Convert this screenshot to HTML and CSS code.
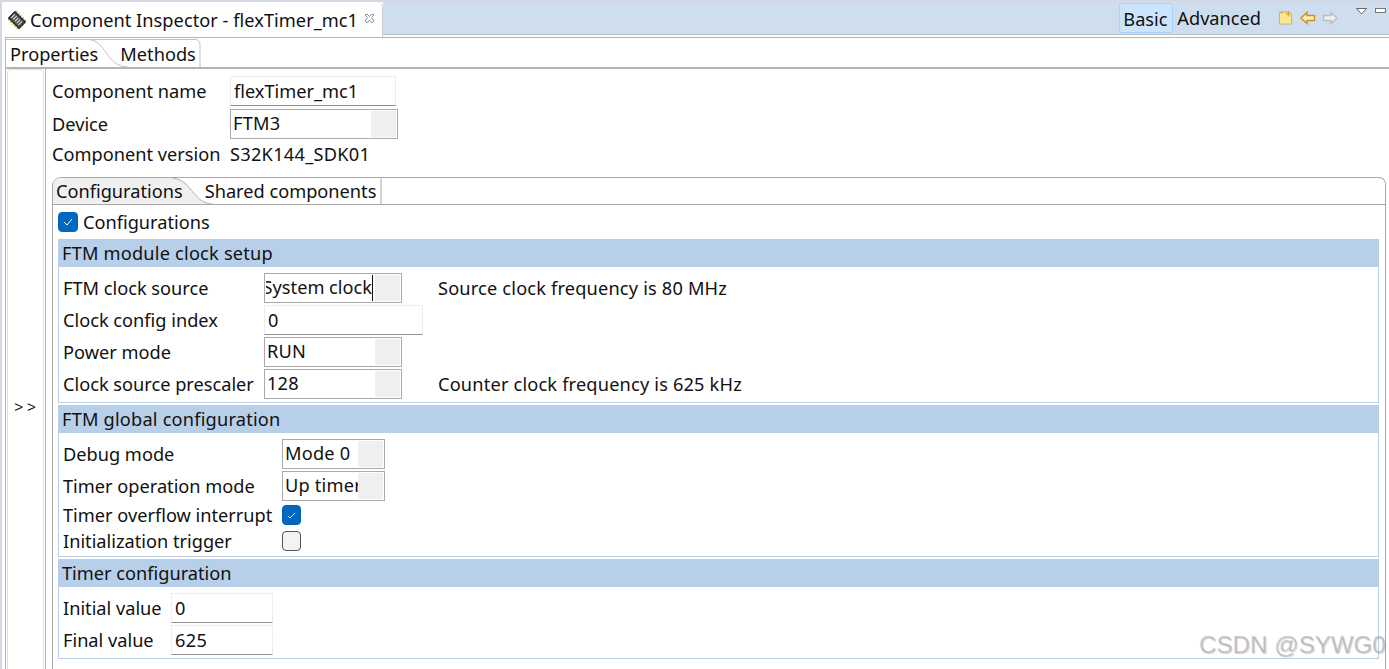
FILE: index.html
```html
<!DOCTYPE html>
<html lang="en">
<head>
<meta charset="utf-8">
<title>Component Inspector</title>
<link rel="stylesheet" href="styles.css">
</head>
<body>
<div class="view">
  <header class="titlebar">
    <div class="viewtab">
      <svg class="chip" width="20" height="20" viewBox="0 0 20 20"><g transform="rotate(-45 10 10)"><path d="M3.500 4h3M3.500 7h3M3.500 10h3M3.500 13h3M3.500 16h3M13.500 4h3M13.500 7h3M13.500 10h3M13.500 13h3M13.500 16h3" stroke="#b5a02c" stroke-width="1.300"/><rect x="5.500" y="2.500" width="9" height="15" fill="#4a4a4a" stroke="#222"/><path d="M7.500 4.500h5M7.500 7h5M7.500 9.500h5M7.500 12h5M7.500 14.500h5" stroke="#e8e8e8" stroke-width="1.100"/></g></svg>
      <span class="viewtitle">Component Inspector - flexTimer_mc1</span>
      <svg class="close" width="11" height="11" viewBox="0 0 11 11"><path d="M1 2l2-1 2.500 2.500L8 1l2 1-2.500 2.500L10 8 8 10 5.500 7 3 10 1 8l2.500-3.500z" fill="#fff" stroke="#8a8f96"/></svg>
    </div>
    <div class="tools">
      <span class="mode active">Basic</span>
      <span class="mode">Advanced</span>
      <svg class="tool first" width="15" height="16" viewBox="0 0 16 16"><path d="M1.500 1.500h10l3 3v10h-13z" fill="#fbe88e" stroke="#b9b28a"/><path d="M11 .5v6M8 3.500h6" stroke="#e6a23a" stroke-width="1.300"/><path d="M3 2.500h2" stroke="#e05a5a"/></svg>
      <svg class="tool back" width="16" height="14" viewBox="0 0 16 14"><path d="M7 1.500L1 7l6 5.500V9.500h7.500v-5H7z" fill="#fdeeb5" stroke="#c8921e" stroke-width="1.400"/></svg>
      <svg class="tool" width="16" height="14" viewBox="0 0 16 14"><path d="M9 1.500L15 7l-6 5.500V9.500H1.500v-5H9z" fill="#eef1f4" stroke="#b8bdc2" stroke-width="1.400"/></svg>
      <svg class="menu" width="11" height="7" viewBox="0 0 11 7"><path d="M.5.500h10L5.500 6z" fill="#fff" stroke="#666"/></svg>
      <svg class="min" width="11" height="6" viewBox="0 0 11 6"><rect x=".5" y=".5" width="10" height="4" fill="#fff" stroke="#777"/></svg>
    </div>
  </header>

  <div class="body">
    <div class="frame">
      <nav class="tabs outer">
        <svg class="tabshape" width="200" height="30" viewBox="0 0 200 30"><path d="M82 1.500H189Q194 1.500 194 7V29" fill="none" stroke="#c0c0c0"/><path d="M0 1.500H82C100 1.500 100 29 122 29" fill="#fff" stroke="#c0c0c0"/></svg>
        <span class="tab props">Properties</span>
        <span class="tab meth">Methods</span>
      </nav>
      <div class="split">
        <aside class="strip"><span>&gt; &gt;</span></aside>
        <main class="main">
          <div class="comp">
            <div class="crow"><label>Component name</label><span class="text w166">flexTimer_mc1</span></div>
            <div class="crow"><label>Device</label><span class="combo w168"><span class="val">FTM3</span><i></i></span></div>
            <div class="crow plain"><label>Component version</label><span class="version">S32K144_SDK01</span></div>
          </div>
          <div class="inner">
            <nav class="tabs second">
              <svg class="tabshape" width="330" height="27" viewBox="0 0 330 27"><path d="M0 0H120C138 0 140 26 160 26H0z" fill="#f0f0f0"/><path d="M120 .5C138 .5 140 26 160 26" fill="none" stroke="#b0b0b0"/><path d="M328 0V26" stroke="#a8a8a8"/></svg>
              <span class="tab conf">Configurations</span>
              <span class="tab shared">Shared components</span>
            </nav>
            <div class="pane">
              <div class="checkrow"><span class="check on big"><svg width="10" height="8" viewBox="0 0 10 8"><path d="M1 4l3 3 5-6" fill="none" stroke="#fff"/></svg></span>Configurations</div>

              <section class="group">
                <h2 class="wide">FTM module clock setup</h2>
                <div class="rows one">
                  <div class="row"><label>FTM clock source</label><span class="combo w138"><span class="val cut"><span>System clock</span></span><i></i><b class="caret"></b></span><span class="note">Source clock frequency is 80 MHz</span></div>
                  <div class="row"><label>Clock config index</label><span class="text w159">0</span></div>
                  <div class="row"><label>Power mode</label><span class="combo w138"><span class="val">RUN</span><i></i></span></div>
                  <div class="row"><label>Clock source prescaler</label><span class="combo w138"><span class="val">128</span><i></i></span><span class="note">Counter clock frequency is 625 kHz</span></div>
                </div>
              </section>

              <section class="group">
                <h2 class="wide">FTM global configuration</h2>
                <div class="rows two">
                  <div class="row"><label>Debug mode</label><span class="combo w103"><span class="val">Mode 0</span><i></i></span></div>
                  <div class="row"><label>Timer operation mode</label><span class="combo w103"><span class="val">Up timer</span><i></i></span></div>
                  <div class="row short"><label>Timer overflow interrupt</label><span class="check on"><svg width="9" height="7" viewBox="0 0 9 7"><path d="M1 4l2 2 5-5" fill="none" stroke="#fff" stroke-width=".8"/></svg></span></div>
                  <div class="row short"><label>Initialization trigger</label><span class="check"></span></div>
                </div>
              </section>

              <section class="group">
                <h2>Timer configuration</h2>
                <div class="rows three">
                  <div class="row"><label>Initial value</label><span class="text w102">0</span></div>
                  <div class="row"><label>Final value</label><span class="text w102">625</span></div>
                </div>
              </section>
            </div>
          </div>
        </main>
      </div>
    </div>
  </div>
  <div class="watermark">CSDN @SYWG0</div>
</div>
</body>
</html>
```
FILE: styles.css
```css
* { box-sizing: border-box; }
html, body { margin: 0; height: 100%; overflow: hidden; }
body { background: #fff; color: #111; font: 18.2px/24px "Noto Sans", "Open Sans", sans-serif; }
.view { position: relative; width: 1389px; height: 669px; overflow: hidden; }
label { display: block; }

/* Title bar */
.titlebar { height: 37px; display: flex; align-items: flex-start; background: #fff; border-top: 2px solid #d5d8e4; border-left: 2px solid #d5d8e4; }
.viewtab { flex: none; width: 381px; height: 35px; padding-left: 5px; display: flex; align-items: center; background: #fff; border-radius: 6px 6px 0 0; border-right: 1px solid #c6cdd6; }
.chip { flex: none; margin-right: 3px; }
.viewtitle { white-space: nowrap; letter-spacing: .04px; }
.close { margin-left: 6px; margin-top: -3px; }
.tools { flex: 1; height: 33px; display: flex; align-items: center; justify-content: flex-end; padding-right: 3px; background: #cfdeee; border-bottom: 1px solid #bcc1c8; }
.mode { height: 30px; line-height: 31px; padding: 0 3px; }
.mode.active { background: #cce4fb; border: 1px solid #a6d2fb; border-radius: 2px; width: 54px; margin-right: 1px; }
.tool { margin-left: 6px; }
.tool.first { margin-left: 14px; }
.tool.back { margin-left: 7px; }
.menu { margin: -14px 0 0 18px; }
.min { margin: -14px 0 0 8px; }

/* Body */
.body { height: 632px; border-left: 2px solid #d5d8e4; padding-left: 3px; }
.frame { height: 100%; border-left: 1px solid #b8b8b8; border-top: 1px solid #b4b4b4; }
.tabs { position: relative; display: flex; }
.tabshape { position: absolute; left: 0; top: 0; pointer-events: none; }
.outer { height: 31px; border-bottom: 2px solid #b4b4b4; }
.tab { position: relative; white-space: nowrap; }
.props { margin: 4px 0 0 4px; }
.meth { margin: 4px 0 0 22px; }
.split { display: flex; height: 600px; }
.strip { flex: none; width: 37px; margin-left: 1px; border: 1px solid #e3e3e3; border-bottom: 0; border-radius: 4px 4px 0 0; display: flex; align-items: center; justify-content: center; font: 15px/20px "Liberation Sans", sans-serif; }
.strip span { margin-top: 74px; margin-right: 1px; }
.main { flex: 1; min-width: 0; margin-left: 1px; padding-left: 6px; border-left: 1px solid #b4b4b4; }

/* Component header */
.comp { padding-top: 7px; }
.crow { display: grid; grid-template-columns: 178px auto; height: 33px; align-items: start; justify-items: start; }
.crow label { line-height: 30px; }
.crow.plain { height: 24px; align-items: center; }
.crow.plain label { line-height: 24px; }
.version { letter-spacing: .27px; }
.text { display: block; height: 30px; line-height: 28px; padding-left: 3px; background: #fff; border: 1px solid #ededed; border-bottom: 1px solid #8f8f8f; }
.combo { display: flex; height: 30px; line-height: 25px; padding: 1px; background: #fff; border: 1px solid #ababab; position: relative; }
.val { flex: 1; min-width: 0; overflow: hidden; white-space: nowrap; padding-left: 1px; letter-spacing: .2px; }
.combo i { flex: none; width: 25px; background: #efefef; }
.cut { display: flex; justify-content: flex-end; padding: 0 3px 0 0; letter-spacing: 0; }
.cut span { flex: none; }
.caret { position: absolute; right: 28px; top: 1px; width: 1px; height: 26px; background: #111; }
.w166 { width: 166px; }
.w168 { width: 168px; }
.w138 { width: 138px; }
.w159 { width: 159px; }
.w103 { width: 103px; }
.w102 { width: 102px; letter-spacing: .4px; }

/* Inner tabs */
.inner { height: 500px; margin-top: 11px; margin-right: 3px; border: 1px solid #a8a8a8; border-bottom: 0; border-radius: 9px 7px 0 0; overflow: hidden; }
.second { height: 27px; border-bottom: 1px solid #a8a8a8; }
.conf { margin: 1px 0 0 3px; }
.shared { margin: 1px 0 0 22px; }
.pane { padding: 7px 6px 0 5px; }
.checkrow { display: flex; align-items: center; height: 20px; gap: 5px; }
.check { flex: none; width: 19px; height: 20px; border: 1px solid #555; border-radius: 4px; background: #f3f3f3; display: flex; align-items: center; justify-content: center; }
.check.on { background: #0067c0; border-color: #0067c0; }
.check.big { width: 20px; }

/* Groups */
.group { margin-bottom: 2px; border: 1px solid #b8cfe9; border-top: 0; }
.checkrow + .group { margin-top: 7px; }
h2 { margin: 0 -1px; height: 28px; padding-left: 4px; font-size: inherit; font-weight: 400; line-height: 28px; background: #b8cfe9; }
h2.wide { letter-spacing: .2px; }
.rows { display: flex; flex-direction: column; gap: 2px; padding: 6px 0 3px 4px; }
.row { display: grid; height: 30px; align-items: center; justify-items: start; white-space: nowrap; }
.row.short { height: 24px; }
.one .row { grid-template-columns: 201px 174px auto; }
.two .row { grid-template-columns: 219px auto; }
.three .row { grid-template-columns: 108px auto; }
.note { letter-spacing: .18px; }

/* Watermark */
.watermark { position: absolute; left: 1199px; top: 630px; font: 24px/30px "Liberation Sans", sans-serif; letter-spacing: .1px; color: rgba(170,170,170,.6); text-shadow: 1px 1px 1px rgba(120,120,120,.3); white-space: nowrap; }
```
